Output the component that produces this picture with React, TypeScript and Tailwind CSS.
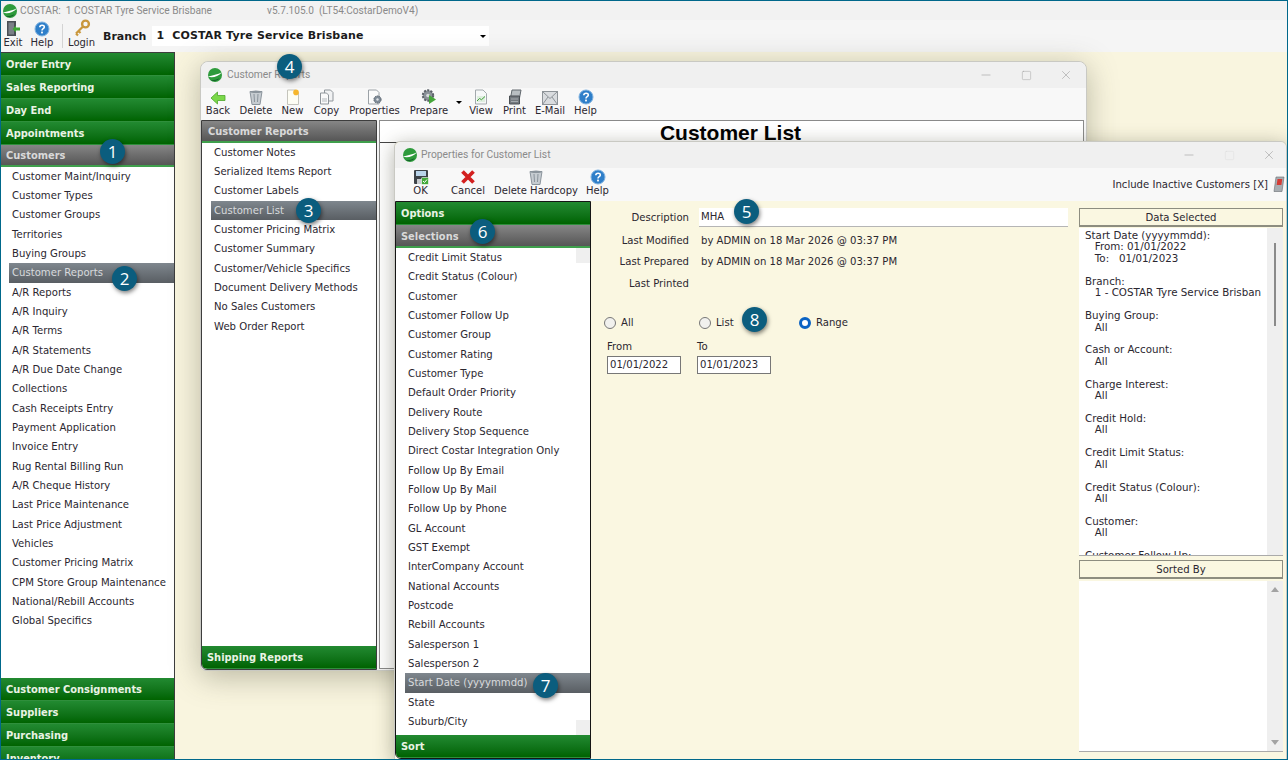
import React from 'react';
import { Minus, Square, X } from 'lucide-react';

const FONT = { fontFamily: '"DejaVu Sans", Verdana, sans-serif' };
const TITLE_FONT = { fontFamily: 'Roboto, sans-serif' };

const Logo = () => (
  <svg width="16" height="16" viewBox="0 0 16 16">
    <circle cx="8" cy="8" r="7" fill="#2e9b3c" />
    <path d="M1 9.500C5 11.500 11 9.600 15 5.200 11 7.400 5 8.200 1 9.500Z" fill="#fff" />
    <path d="M3.600 13c3 1.800 7 1 9-1.800-3 1.400-6 2-9 1.800Z" fill="#14602a" />
  </svg>
);

const HelpIcon = () => (
  <svg width="16" height="16" viewBox="0 0 16 16">
    <circle cx="8" cy="8" r="7" fill="#2f7fc9" stroke="#7fb2e0" />
    <path d="M5.800 6.200C5.900 3.600 10.300 3.600 10.300 6c0 1.700-2.300 1.600-2.300 3.400" fill="none" stroke="#fff" strokeWidth="1.600" />
    <rect x="7.100" y="10.600" width="1.800" height="1.800" fill="#fff" />
  </svg>
);

const ExitIcon = () => (
  <svg width="16" height="17" viewBox="0 0 16 17">
    <rect x="2" y="1" width="9" height="15" fill="#4b4f55" />
    <rect x="3.500" y="2.500" width="5.500" height="12" fill="#7b8087" />
    <path d="M15 7.500h-4V5.500L7.500 9l3.500 3.500v-2h4Z" fill="#3fa535" />
  </svg>
);

const KeyIcon = () => (
  <svg width="18" height="18" viewBox="0 0 18 18">
    <circle cx="12.500" cy="5" r="3.400" fill="none" stroke="#c9973c" strokeWidth="2.400" />
    <path d="M10 7.500 3 14.500M3 14.500l2 2M5.500 12l2 2" stroke="#c9973c" strokeWidth="2.200" fill="none" />
  </svg>
);

const BackIcon = () => (
  <svg width="16" height="14" viewBox="0 0 16 14">
    <path d="M1 7 7.500 1v3.500H15v5H7.500V13Z" fill="#7bd84a" stroke="#4ea62c" strokeWidth="0.800" />
  </svg>
);

const TrashIcon = () => (
  <svg width="14" height="15" viewBox="0 0 14 15">
    <path d="M1 1.500h12L11 14.500H3Z" fill="#c6ccd1" stroke="#8b949c" />
    <path d="M5 4l.5 8M9 4l-.5 8" stroke="#8b949c" />
    <ellipse cx="7" cy="1.800" rx="6" ry="1.300" fill="#8b949c" />
  </svg>
);

const NewIcon = () => (
  <svg width="14" height="16" viewBox="0 0 14 16">
    <path d="M1.500 1h8l3 3v11.500h-11Z" fill="#fdfdf4" stroke="#c4c4bc" />
    <circle cx="10" cy="3.400" r="2.800" fill="#f6b62c" />
  </svg>
);

const CopyIcon = () => (
  <svg width="15" height="16" viewBox="0 0 15 16">
    <path d="M5.500 1h6l2.500 2.500v8.500H5.500Z" fill="#f1f2f3" stroke="#8f959a" />
    <path d="M1.500 4h6l2 2v9h-8Z" fill="#fafafa" stroke="#8f959a" />
    <path d="M3 10h5M3 12h5" stroke="#b4b9bd" />
  </svg>
);

const PropertiesIcon = () => (
  <svg width="16" height="16" viewBox="0 0 16 16">
    <path d="M1.500 1h8l2.500 2.500V15H1.500Z" fill="#fbfbfb" stroke="#9ca2a7" />
    <circle cx="10.500" cy="10.500" r="3.600" fill="#7e8a96" stroke="#5c6670" strokeDasharray="1.500 0.800" />
    <circle cx="10.500" cy="10.500" r="1.200" fill="#dfe3e6" />
  </svg>
);

const PrepareIcon = () => (
  <svg width="18" height="17" viewBox="0 0 18 17">
    <circle cx="8" cy="7.500" r="5.200" fill="#8b9298" stroke="#5a6067" strokeWidth="2" strokeDasharray="2 1.300" />
    <circle cx="8" cy="7.500" r="1.800" fill="#d7dadd" />
    <path d="M9 7v9l7-4.500Z" fill="#46a63a" />
  </svg>
);

const ViewIcon = () => (
  <svg width="14" height="16" viewBox="0 0 14 16">
    <path d="M1.500 1h7.500l3.500 3.500V15h-11Z" fill="#f6f8f8" stroke="#a3a9ad" />
    <rect x="3" y="7" width="8" height="6" fill="#dfeee0" />
    <path d="M3 12l2.500-2.500 2 1.200L11 7.500" fill="none" stroke="#41a03a" />
  </svg>
);

const PrintIcon = () => (
  <svg width="16" height="16" viewBox="0 0 16 16">
    <path d="M5 1h9l-1.500 8H3.500Z" fill="#b9bec2" stroke="#62686e" />
    <path d="M2.500 7h10v8h-10Z" fill="#74797f" stroke="#4a4f54" />
    <path d="M4 10h7M4 12.500h7" stroke="#a5aaaf" />
  </svg>
);

const MailIcon = () => (
  <svg width="16" height="14" viewBox="0 0 16 14">
    <rect x="0.500" y="0.500" width="15" height="13" fill="#d9dcdf" stroke="#8d9398" />
    <path d="M.5.500 8 7.500 15.500.500M.5 13.500l5.500-7.500M15.500 13.500 10 6" fill="none" stroke="#8d9398" />
  </svg>
);

const SaveIcon = () => (
  <svg width="16" height="16" viewBox="0 0 16 16">
    <rect x="1" y="1" width="14" height="14" rx="1" fill="#3d4248" />
    <rect x="3" y="2" width="10" height="5" fill="#b9d4ea" />
    <rect x="4" y="10" width="5" height="5" fill="#c7cbcf" />
    <rect x="8.500" y="8.500" width="7" height="7" rx="1" fill="#42a93a" stroke="#fff" strokeWidth="0.600" />
    <path d="M10 12l1.500 1.500 2.500-3" fill="none" stroke="#fff" />
  </svg>
);

const CancelIcon = () => (
  <svg width="16" height="16" viewBox="0 0 16 16">
    <path d="M2.500 2.500 13.500 13.500M13.500 2.500 2.500 13.500" stroke="#d3201f" strokeWidth="3.800" />
  </svg>
);

const FilterIcon = () => (
  <svg width="12" height="17" viewBox="0 0 12 17">
    <path d="M3 1h8L9 15.500H1Z" fill="#a8adb2" stroke="#666b70" strokeWidth="0.600" />
    <path d="M4.500 3h4.800L8.400 9H3.700Z" fill="#d43c35" />
  </svg>
);

const ToolBtn = ({ label, w, icon }: { label: string; w: number; icon: React.ReactNode }) => (
  <div className="flex flex-col items-center shrink-0" style={{ width: w }}>
    <div className="h-[17px] flex items-end justify-center">{icon}</div>
    <span className="text-[10px] leading-[12px] text-[#2b2730] whitespace-nowrap">{label}</span>
  </div>
);

const GreenHeader = ({ label }: { label: string }) => (
  <div className="h-[23px] shrink-0 flex items-center pl-[5px] pt-[3px] bg-gradient-to-b from-[#228a31] to-[#006300] border-b border-[#2f8f3c] text-[9.9px] font-bold text-[#e9f3e4] whitespace-nowrap">
    {label}
  </div>
);

const GreyHeader = ({ label, pad = 5, h = 21.7 }: { label: string; pad?: number; h?: number }) => (
  <div className="shrink-0 flex items-center pt-[3px] bg-gradient-to-b from-[#868686] to-[#565656] border-b-2 border-[#3f9f4c] text-[9.9px] font-bold text-[#d9d9d9] whitespace-nowrap" style={{ paddingLeft: pad, height: h }}>
    {label}
  </div>
);

const Row = ({ label, pad, selected, inset }: { label: string; pad: number; selected?: boolean; inset: number }) =>
  selected ? (
    <div className="h-[19.33px] shrink-0 flex items-center bg-gradient-to-b from-[#7f878e] to-[#595e63] text-[10.1px] text-[#d8dadc] whitespace-nowrap" style={{ marginLeft: inset, paddingLeft: pad - inset }}>
      {label}
    </div>
  ) : (
    <div className="h-[19.33px] shrink-0 flex items-center text-[10.1px] text-[#2b2730] whitespace-nowrap" style={{ paddingLeft: pad }}>
      {label}
    </div>
  );

const WinControls = ({ faded }: { faded?: boolean }) => (
  <div className="flex items-center gap-[27.5px] text-[#9b9b9b]">
    <Minus size={14} strokeWidth={1} />
    <Square size={11} strokeWidth={1} className={faded ? 'text-[#dcdcdc]' : ''} />
    <X size={14} strokeWidth={1} />
  </div>
);

const Badge = ({ n, className }: { n: number; className: string }) => (
  <div className={`absolute w-[25px] h-[25px] rounded-full bg-[#0b5d7e] text-white text-[17px] flex items-center justify-center shadow-[1px_2px_4px_rgba(0,0,0,0.5)] ${className}`} style={{ fontFamily: '"Open Sans", sans-serif' }}>
    {n}
  </div>
);

const topMenus = ['Order Entry', 'Sales Reporting', 'Day End', 'Appointments'];
const bottomMenus = ['Customer Consignments', 'Suppliers', 'Purchasing', 'Inventory'];
const customerItems = [
  'Customer Maint/Inquiry', 'Customer Types', 'Customer Groups', 'Territories', 'Buying Groups', 'Customer Reports',
  'A/R Reports', 'A/R Inquiry', 'A/R Terms', 'A/R Statements', 'A/R Due Date Change', 'Collections',
  'Cash Receipts Entry', 'Payment Application', 'Invoice Entry', 'Rug Rental Billing Run', 'A/R Cheque History',
  'Last Price Maintenance', 'Last Price Adjustment', 'Vehicles', 'Customer Pricing Matrix', 'CPM Store Group Maintenance',
  'National/Rebill Accounts', 'Global Specifics',
];
const reportItems = [
  'Customer Notes', 'Serialized Items Report', 'Customer Labels', 'Customer List', 'Customer Pricing Matrix', 'Customer Summary',
  'Customer/Vehicle Specifics', 'Document Delivery Methods', 'No Sales Customers', 'Web Order Report',
];
const selectionItems = [
  'Credit Limit Status', 'Credit Status (Colour)', 'Customer', 'Customer Follow Up', 'Customer Group', 'Customer Rating',
  'Customer Type', 'Default Order Priority', 'Delivery Route', 'Delivery Stop Sequence', 'Direct Costar Integration Only',
  'Follow Up By Email', 'Follow Up By Mail', 'Follow Up by Phone', 'GL Account', 'GST Exempt', 'InterCompany Account',
  'National Accounts', 'Postcode', 'Rebill Accounts', 'Salesperson 1', 'Salesperson 2', 'Start Date (yyyymmdd)', 'State', 'Suburb/City',
];
const dataSelected = `Start Date (yyyymmdd):
   From: 01/01/2022
   To:   01/01/2023

Branch:
   1 - COSTAR Tyre Service Brisban

Buying Group:
   All

Cash or Account:
   All

Charge Interest:
   All

Credit Hold:
   All

Credit Limit Status:
   All

Credit Status (Colour):
   All

Customer:
   All

Customer Follow Up:`;

const Radio = ({ label, on, w }: { label: string; on?: boolean; w: number }) => (
  <div className="flex items-center gap-[5px] shrink-0" style={{ width: w }}>
    {on ? (
      <div className="w-[12px] h-[12px] rounded-full bg-white border-[3px] border-[#0a63c4]" />
    ) : (
      <div className="w-[12px] h-[12px] rounded-full bg-[#f1f1ee] border border-[#777]" />
    )}
    <span className="text-[10.1px] text-[#2b2730]">{label}</span>
  </div>
);

const SectionLabel = ({ label }: { label: string }) => (
  <div className="h-[19px] shrink-0 flex items-center justify-center pt-[1px] bg-[#faf7e1] border border-[#8d8d80] border-b-2 text-[10.1px] text-[#2b2730]">
    {label}
  </div>
);

const InfoRow = ({ label, value, h }: { label: string; value?: string; h: number }) => (
  <div className="flex items-center text-[10.1px] text-[#2b2730]" style={{ height: h }}>
    <span className="w-[98px] text-right shrink-0">{label}</span>
    <span className="ml-[12px] whitespace-nowrap">{value}</span>
  </div>
);

const DateField = ({ label, value }: { label: string; value: string }) => (
  <div className="flex flex-col">
    <span className="text-[10.1px] leading-[13px] text-[#2b2730]">{label}</span>
    <div className="w-[74px] h-[18px] mt-[3px] bg-white border border-[#777] flex items-center pl-[2px] text-[10.1px] text-[#2b2730]">{value}</div>
  </div>
);

export default function App() {
  return (
    <div className="relative w-[1288px] h-[760px] overflow-hidden flex flex-col bg-[#f9f5df] border border-[#00688b]" style={FONT}>
      {/* App title bar */}
      <div className="h-[19px] shrink-0 flex items-center pt-[1px] bg-[#f2f2f2] pl-[1px] text-[#8a8a8a]" style={TITLE_FONT}>
        <Logo />
        <span className="ml-[2px] w-[247px] text-[10.2px] whitespace-pre">COSTAR:  1 COSTAR Tyre Service Brisbane</span>
        <span className="text-[10.1px] whitespace-pre">v5.7.105.0  (LT54:CostarDemoV4)</span>
      </div>

      {/* App toolbar */}
      <div className="h-[32px] shrink-0 flex items-start bg-[#f5f5f5]">
        <ToolBtn label="Exit" w={24} icon={<ExitIcon />} />
        <div className="ml-[3px]"><ToolBtn label="Help" w={28} icon={<HelpIcon />} /></div>
        <div className="w-px h-[24px] bg-[#d4d4d4] ml-[6px] mr-[5px] mt-[4px]" />
        <ToolBtn label="Login" w={27} icon={<KeyIcon />} />
        <div className="ml-[8px] mt-[9px] text-[11px] font-bold text-[#1c1c1c]">Branch</div>
        <div className="relative ml-[6px] mt-[6px] w-[337px] h-[20px] bg-white flex items-center pl-[4px] text-[11px] font-bold tracking-[0.15px] text-[#1c1c1c] whitespace-pre">
          1  COSTAR Tyre Service Brisbane
          <div className="absolute right-[3px] top-[9px] w-0 h-0 border-x-[3px] border-x-transparent border-t-[3px] border-t-black" />
        </div>
      </div>

      <div className="relative flex flex-1 min-h-0">
        {/* Left navigation */}
        <div className="w-[174px] shrink-0 flex flex-col overflow-hidden bg-white border-r border-t border-[#3d3d3d]">
          {topMenus.map((m) => <GreenHeader key={m} label={m} />)}
          <GreyHeader label="Customers" />
          <div className="h-[511.300px] shrink-0 flex flex-col">
            {customerItems.map((i) => (
              <Row key={i} label={i} pad={11} inset={8} selected={i === 'Customer Reports'} />
            ))}
          </div>
          {bottomMenus.map((m) => <GreenHeader key={m} label={m} />)}
        </div>

        {/* Customer Reports window */}
        <div className="absolute left-[199px] top-[9px] w-[887px] h-[610px] flex flex-col rounded-t-[8px] rounded-b-[6px] bg-[#f5f5f5] border border-[#c9c9c3] shadow-[0_6px_30px_rgba(70,70,50,0.35)]">
          <div className="h-[26px] shrink-0 flex items-center justify-between pl-[6px] pr-[13px] bg-[#f0f0f0] rounded-t-[8px] text-[#8a8a8a]">
            <div className="flex items-center gap-[4px] text-[10.300px]" style={TITLE_FONT}>
              <Logo />
              <span>Customer Reports</span>
            </div>
            <WinControls />
          </div>
          <div className="h-[32px] shrink-0 flex items-start pl-[4px] bg-[#f8f8f8]">
            <ToolBtn label="Back" w={26} icon={<BackIcon />} />
            <div className="ml-[9px]"><ToolBtn label="Delete" w={32} icon={<TrashIcon />} /></div>
            <div className="ml-[10px]"><ToolBtn label="New" w={21} icon={<NewIcon />} /></div>
            <div className="ml-[10px]"><ToolBtn label="Copy" w={27} icon={<CopyIcon />} /></div>
            <div className="ml-[9px]"><ToolBtn label="Properties" w={51} icon={<PropertiesIcon />} /></div>
            <div className="ml-[9px]"><ToolBtn label="Prepare" w={40} icon={<PrepareIcon />} /></div>
            <div className="mt-[13px] ml-[7px] mr-[7px] w-0 h-0 border-x-[3px] border-x-transparent border-t-[3px] border-t-black" />
            <ToolBtn label="View" w={24} icon={<ViewIcon />} />
            <div className="ml-[10px]"><ToolBtn label="Print" w={23} icon={<PrintIcon />} /></div>
            <div className="ml-[9px]"><ToolBtn label="E-Mail" w={30} icon={<MailIcon />} /></div>
            <div className="ml-[9px]"><ToolBtn label="Help" w={23} icon={<HelpIcon />} /></div>
          </div>
          <div className="flex-1 flex min-h-0">
            <div className="w-[176px] shrink-0 flex flex-col bg-white border border-[#3d3d3d] rounded-bl-[6px] overflow-hidden">
              <GreyHeader label="Customer Reports" pad={6} />
              <div className="flex-1 min-h-0 flex flex-col">
                {reportItems.map((i) => (
                  <Row key={i} label={i} pad={12} inset={9} selected={i === 'Customer List'} />
                ))}
              </div>
              <GreenHeader label="Shipping Reports" />
            </div>
            <div className="flex-1 flex flex-col mx-[2px] mb-[1px] bg-white border border-[#8a8a8a]">
              <div className="h-[22px] shrink-0 pt-[3px] pr-[2px] border-b border-[#444] flex items-center justify-center text-[21px] font-bold text-black" style={{ fontFamily: '"Liberation Sans", Arial, sans-serif' }}>
                Customer List
              </div>
            </div>
          </div>
        </div>

        {/* Properties dialog */}
        <div className="absolute left-[393px] top-[89px] w-[893px] h-[619px] flex flex-col rounded-t-[6px] bg-[#faf7e1] border border-[#c9c9c3] shadow-[0_4px_20px_rgba(60,60,40,0.4)]">
          <div className="h-[26px] shrink-0 flex items-center justify-between pl-[7px] pr-[10px] bg-[#f0f0f0] rounded-t-[6px] text-[#8a8a8a]">
            <div className="flex items-center gap-[3px] text-[10.300px]" style={TITLE_FONT}>
              <Logo />
              <span>Properties for Customer List</span>
            </div>
            <WinControls faded />
          </div>
          <div className="h-[33px] shrink-0 flex items-start justify-between pl-[12px] pr-[1px] bg-[#f8f8f8]">
            <div className="flex items-start">
              <ToolBtn label="OK" w={27} icon={<SaveIcon />} />
              <div className="ml-[17px]"><ToolBtn label="Cancel" w={34} icon={<CancelIcon />} /></div>
              <div className="ml-[10px]"><ToolBtn label="Delete Hardcopy" w={82} icon={<TrashIcon />} /></div>
              <div className="ml-[9px]"><ToolBtn label="Help" w={23} icon={<HelpIcon />} /></div>
            </div>
            <div className="flex items-center gap-[5px] mt-[8px] text-[10.1px] text-[#2b2730]">
              <span>Include Inactive Customers [X]</span>
              <FilterIcon />
            </div>
          </div>

          <div className="flex-1 flex min-h-0">
            {/* Selection list */}
            <div className="w-[196px] shrink-0 flex flex-col bg-white border border-[#151515] rounded-bl-[6px] overflow-hidden">
              <GreenHeader label="Options" />
              <GreyHeader label="Selections" h={23} />
              <div className="relative flex-1 min-h-0 flex flex-col">
                {selectionItems.map((i) => (
                  <Row key={i} label={i} pad={12} inset={9} selected={i === 'Start Date (yyyymmdd)'} />
                ))}
                <div className="absolute right-0 top-0 w-[14px] h-[15px] bg-[#efefef]" />
                <div className="absolute right-0 bottom-0 w-[14px] h-[15px] bg-[#efefef]" />
              </div>
              <GreenHeader label="Sort" />
            </div>

            {/* Form */}
            <div className="w-[488px] shrink-0 flex flex-col pt-[7px]">
              <div className="flex items-center text-[10.1px] text-[#2b2730] h-[19px]">
                <span className="w-[98px] text-right shrink-0">Description</span>
                <div className="ml-[10px] w-[369px] h-[19px] bg-white border-b border-[#b5b5b5] flex items-center pl-[2px]">MHA</div>
              </div>
              <div className="mt-[3px]">
                <InfoRow label="Last Modified" value="by ADMIN on 18 Mar 2026 @ 03:37 PM" h={21} />
                <InfoRow label="Last Prepared" value="by ADMIN on 18 Mar 2026 @ 03:37 PM" h={21} />
                <InfoRow label="Last Printed" h={24} />
              </div>
              <div className="flex items-center mt-[19px] ml-[13px] h-[16px]">
                <Radio label="All" w={95} />
                <Radio label="List" w={100} />
                <Radio label="Range" on w={80} />
              </div>
              <div className="flex mt-[9px] ml-[16px] gap-[16px]">
                <DateField label="From" value="01/01/2022" />
                <DateField label="To" value="01/01/2023" />
              </div>
            </div>

            {/* Data selected / sorted by */}
            <div className="w-[204px] shrink-0 flex flex-col pt-[7px] pb-[7px]">
              <SectionLabel label="Data Selected" />
              <div className="relative h-[328px] mt-[1px] shrink-0 flex bg-white border-b border-[#aaa] overflow-hidden">
                <pre className="flex-1 pl-[6px] pt-[2px] text-[10.3px] leading-[11.43px] text-[#2b2730] overflow-hidden" style={FONT}>{dataSelected}</pre>
                <div className="w-[16px] shrink-0 bg-[#efefef] flex justify-center pt-[15px]">
                  <div className="w-[2px] h-[83px] bg-[#8a8a8a]" />
                </div>
              </div>
              <div className="mt-[4px]"><SectionLabel label="Sorted By" /></div>
              <div className="flex-1 min-h-0 mt-[2px] flex justify-end bg-white border-b border-[#aaa]">
                <div className="w-[16px] bg-[#efefef] flex flex-col items-center justify-between py-[6px]">
                  <div className="w-0 h-0 border-x-[4px] border-x-transparent border-b-[5px] border-b-[#a3a3a3]" />
                  <div className="w-0 h-0 border-x-[4px] border-x-transparent border-t-[5px] border-t-[#a3a3a3]" />
                </div>
              </div>
            </div>
          </div>
        </div>

        <Badge n={1} className="left-[99px] top-[87px]" />
        <Badge n={2} className="left-[111px] top-[214px]" />
        <Badge n={3} className="left-[295px] top-[146px]" />
        <Badge n={4} className="left-[276px] top-[2px]" />
        <Badge n={5} className="left-[733px] top-[147px]" />
        <Badge n={6} className="left-[469px] top-[167px]" />
        <Badge n={7} className="left-[532px] top-[621px]" />
        <Badge n={8} className="left-[741px] top-[255px]" />
      </div>
    </div>
  );
}
